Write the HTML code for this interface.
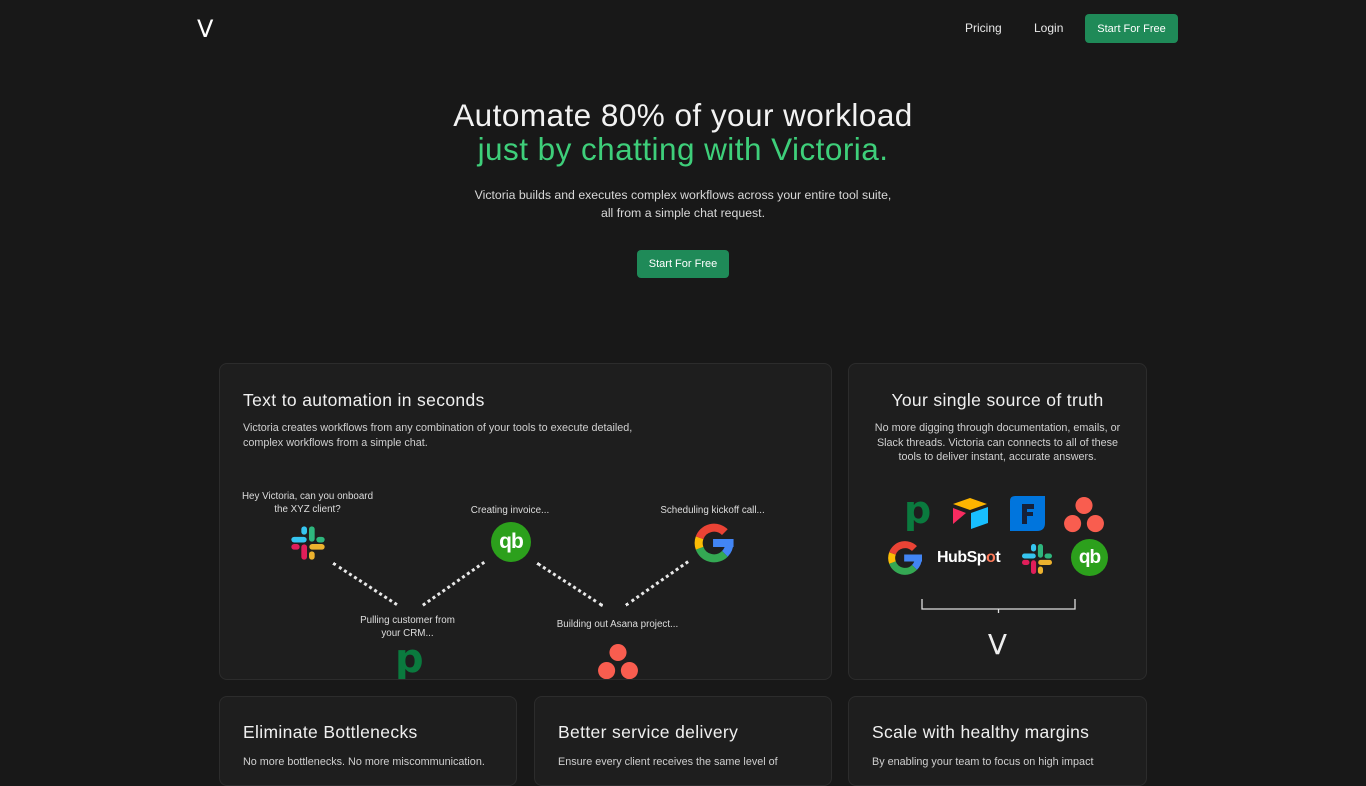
<!DOCTYPE html>
<html><head><meta charset="utf-8"><style>
*{margin:0;padding:0;box-sizing:border-box}
body{width:1366px;height:768px;overflow:hidden;background:#181818;font-family:"Liberation Sans",sans-serif;color:#fff;position:relative}
.a{position:absolute}
.btn{background:#1f8a58;color:#fff;border-radius:4px;font-size:11px;display:flex;align-items:center;justify-content:center}
.card{position:absolute;background:#1e1e1e;border:1px solid #2c2c2c;border-radius:8px;overflow:hidden}
.card h3{font-weight:400;font-size:17.5px;letter-spacing:0.35px;color:#f0f0f0}
.card p{font-size:10.8px;color:#cfcfcf;line-height:14.5px}
.lbl{position:absolute;font-size:9.8px;color:#ddd;text-align:center;line-height:13px}
.dot{position:absolute;height:0;border-top:3px dotted #e8e8e8;transform-origin:0 0}
.qb{position:absolute;border-radius:50%;background:#2ca01c;color:#fff;display:flex;align-items:center;justify-content:center;font-weight:700;letter-spacing:-1px}
.pd{position:absolute;color:#0a7a3e;font-weight:700;font-family:"DejaVu Sans",sans-serif}
</style></head><body>
<div class="a" style="left:197px;top:15px;font-size:24px;font-family:'DejaVu Sans',sans-serif">V</div>
<div class="a" style="left:965px;top:21px;font-size:12px;color:#e8e8e8">Pricing</div>
<div class="a" style="left:1034px;top:21px;font-size:12px;color:#e8e8e8">Login</div>
<div class="a btn" style="left:1085px;top:14px;width:93px;height:29px">Start For Free</div>

<div class="a" style="left:0;width:1366px;top:98px;text-align:center;font-size:31.5px;letter-spacing:0.45px;line-height:34px;color:#f2f2f2">Automate 80% of your workload<br><span style="color:#3ecf7a">just by chatting with Victoria.</span></div>
<div class="a" style="left:0;width:1366px;top:186px;text-align:center;font-size:12.3px;line-height:18px;color:#d8d8d8">Victoria builds and executes complex workflows across your entire tool suite,<br>all from a simple chat request.</div>
<div class="a btn" style="left:637px;top:250px;width:92px;height:28px">Start For Free</div>

<div class="card" style="left:219px;top:363px;width:613px;height:317px">
<h3 class="a" style="left:23px;top:26px">Text to automation in seconds</h3>
<p class="a" style="left:23px;top:57px;width:430px">Victoria creates workflows from any combination of your tools to execute detailed, complex workflows from a simple chat.</p>
<div class="lbl" style="left:10px;top:126px;width:155px">Hey Victoria, can you onboard<br>the XYZ client?</div>
<svg class="a" style="left:68px;top:159px" width="40" height="40" viewBox="0 0 24 24"><g><rect x="2" y="8.3" width="9.2" height="3.4" rx="1.7" fill="#36C5F0"/><rect x="8" y="2" width="3.4" height="5" rx="1.7" fill="#36C5F0"/><rect x="12.6" y="2" width="3.4" height="9.2" rx="1.7" fill="#2EB67D"/><rect x="17" y="8.3" width="5" height="3.4" rx="1.7" fill="#2EB67D"/><rect x="12.8" y="12.6" width="9.2" height="3.4" rx="1.7" fill="#ECB22E"/><rect x="12.6" y="17" width="3.4" height="5" rx="1.7" fill="#ECB22E"/><rect x="8" y="12.8" width="3.4" height="9.2" rx="1.7" fill="#E01E5A"/><rect x="2" y="12.6" width="5" height="3.4" rx="1.7" fill="#E01E5A"/></g></svg>
<div class="lbl" style="left:230px;top:140px;width:120px">Creating invoice...</div>
<div class="qb" style="left:271px;top:158px;width:40px;height:40px;font-size:21px">qb</div>
<div class="lbl" style="left:430px;top:140px;width:125px">Scheduling kickoff call...</div>
<svg class="a" style="left:471px;top:156px" width="46" height="46" viewBox="0 0 24 24" fill="none" stroke-width="4.2"><path d="M20 12 A8 8 0 0 1 17.66 17.66" stroke="#4285F4"/><path d="M11.5 12 H22.2" stroke="#4285F4"/><path d="M17.66 17.66 A8 8 0 0 1 4.48 14.74" stroke="#34A853"/><path d="M4.48 14.74 A8 8 0 0 1 4.48 9.26" stroke="#FBBC05"/><path d="M4.48 9.26 A8 8 0 0 1 17.66 6.34" stroke="#EA4335"/></svg>
<div class="dot" style="left:114px;top:198px;width:76px;transform:rotate(33deg)"></div>
<div class="dot" style="left:202px;top:240px;width:75px;transform:rotate(-35deg)"></div>
<div class="dot" style="left:318px;top:198px;width:78px;transform:rotate(33deg)"></div>
<div class="dot" style="left:405px;top:240px;width:76px;transform:rotate(-35deg)"></div>
<div class="lbl" style="left:120px;top:250px;width:135px">Pulling customer from<br>your CRM...</div>
<div class="pd" style="left:175px;top:272px;font-size:40px;line-height:46px">p</div>
<div class="lbl" style="left:320px;top:254px;width:155px">Building out Asana project...</div>
<svg class="a" style="left:377px;top:279px" width="42" height="38" viewBox="0 0 44 40"><circle cx="22" cy="10" r="9" fill="#F95D4F"/><circle cx="10" cy="29" r="9" fill="#F95D4F"/><circle cx="34" cy="29" r="9" fill="#F95D4F"/></svg>
</div>

<div class="card" style="left:848px;top:363px;width:299px;height:317px">
<h3 class="a" style="left:0;width:297px;text-align:center;top:26px">Your single source of truth</h3>
<p class="a" style="left:20px;width:257px;text-align:center;top:57px">No more digging through documentation, emails, or Slack threads. Victoria can connects to all of these tools to deliver instant, accurate answers.</p>
<div class="pd" style="left:55px;top:124px;font-size:38px;line-height:44px">p</div>
<svg class="a" style="left:101px;top:132px" width="40" height="34" viewBox="0 0 40 34"><polygon points="20,2 37,8 20,14 3,8" fill="#FCB400"/><polygon points="3,12 16,17 3,28" fill="#F82B60"/><polygon points="21,17 38,11 38,27 21,33" fill="#18BFFF"/></svg>
<svg class="a" style="left:160px;top:131px" width="37" height="37" viewBox="0 0 37 37"><path d="M6 1 H36 V28 Q36 36 28 36 H1 V6 Q1 1 6 1Z" fill="#0075dd"/><path d="M13 9 H25 V14 H18 V17 H24 V21 H18 V29 H13Z" fill="#16213a"/></svg>
<svg class="a" style="left:214px;top:132px" width="42" height="38" viewBox="0 0 44 40"><circle cx="22" cy="10" r="9" fill="#F95D4F"/><circle cx="10" cy="29" r="9" fill="#F95D4F"/><circle cx="34" cy="29" r="9" fill="#F95D4F"/></svg>
<svg class="a" style="left:36px;top:174px" width="40" height="40" viewBox="0 0 24 24" fill="none" stroke-width="4.2"><path d="M20 12 A8 8 0 0 1 17.66 17.66" stroke="#4285F4"/><path d="M11.5 12 H22.2" stroke="#4285F4"/><path d="M17.66 17.66 A8 8 0 0 1 4.48 14.74" stroke="#34A853"/><path d="M4.48 14.74 A8 8 0 0 1 4.48 9.26" stroke="#FBBC05"/><path d="M4.48 9.26 A8 8 0 0 1 17.66 6.34" stroke="#EA4335"/></svg>
<div class="a" style="left:88px;top:185px;font-size:16px;font-weight:700;letter-spacing:-0.5px;color:#fff">HubSp<span style="color:#ff7a59">o</span>t</div>
<svg class="a" style="left:170px;top:177px" width="36" height="36" viewBox="0 0 24 24"><rect x="2" y="8.3" width="9.2" height="3.4" rx="1.7" fill="#36C5F0"/><rect x="8" y="2" width="3.4" height="5" rx="1.7" fill="#36C5F0"/><rect x="12.6" y="2" width="3.4" height="9.2" rx="1.7" fill="#2EB67D"/><rect x="17" y="8.3" width="5" height="3.4" rx="1.7" fill="#2EB67D"/><rect x="12.8" y="12.6" width="9.2" height="3.4" rx="1.7" fill="#ECB22E"/><rect x="12.6" y="17" width="3.4" height="5" rx="1.7" fill="#ECB22E"/><rect x="8" y="12.8" width="3.4" height="9.2" rx="1.7" fill="#E01E5A"/><rect x="2" y="12.6" width="5" height="3.4" rx="1.7" fill="#E01E5A"/></svg>
<div class="qb" style="left:222px;top:175px;width:37px;height:37px;font-size:19px">qb</div>
<svg class="a" style="left:72px;top:234px" width="155" height="16" viewBox="0 0 155 16" fill="none" stroke="#ddd" stroke-width="1.3"><path d="M1 1 V11 H154 V1 M77.5 11 V15"/></svg>
<div class="a" style="left:0;width:297px;text-align:center;top:264px;font-size:28px;font-family:'DejaVu Sans',sans-serif;color:#eee">V</div>
</div>

<div class="card" style="left:219px;top:696px;width:298px;height:90px"><h3 class="a" style="left:23px;top:25px">Eliminate Bottlenecks</h3><p class="a" style="left:23px;top:58px;width:270px">No more bottlenecks. No more miscommunication.</p></div>
<div class="card" style="left:534px;top:696px;width:298px;height:90px"><h3 class="a" style="left:23px;top:25px">Better service delivery</h3><p class="a" style="left:23px;top:58px;width:270px">Ensure every client receives the same level of</p></div>
<div class="card" style="left:848px;top:696px;width:299px;height:90px"><h3 class="a" style="left:23px;top:25px">Scale with healthy margins</h3><p class="a" style="left:23px;top:58px;width:270px">By enabling your team to focus on high impact</p></div>
</body></html>
